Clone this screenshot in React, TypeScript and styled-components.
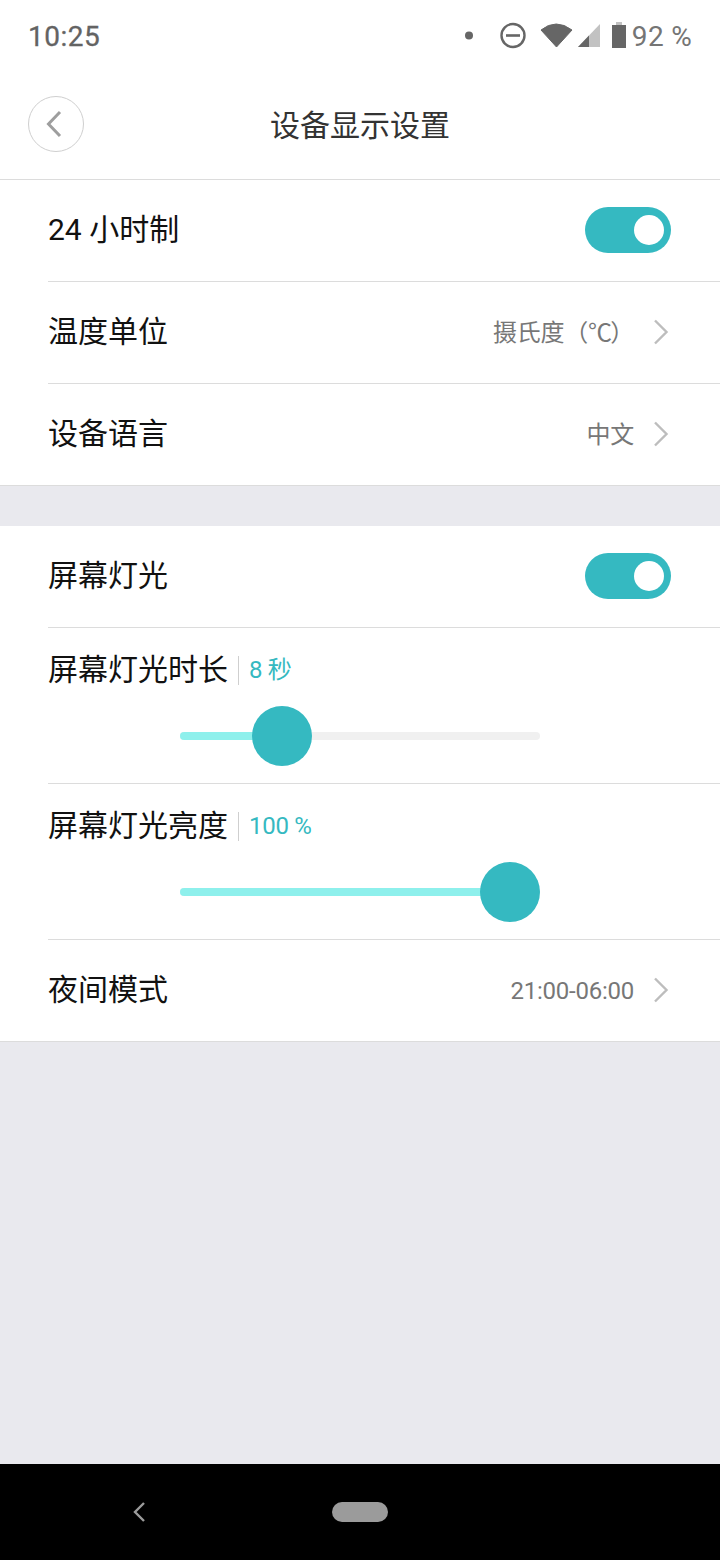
import styled, { createGlobalStyle } from 'styled-components';

const GlobalStyle = createGlobalStyle`
  html, body {
    margin: 0;
    padding: 0;
    background: #e9e9ee;
    font-family: Roboto, "Noto Sans CJK SC", sans-serif;
  }
`;

const Page = styled.div`
  width: 720px;
  height: 1560px;
  display: flex;
  flex-direction: column;
  background: #e9e9ee;
  overflow: hidden;
`;

const StatusBar = styled.div`
  height: 72px;
  padding: 0 28px;
  box-sizing: border-box;
  display: flex;
  align-items: center;
  justify-content: space-between;
  background: #fff;
  color: #757575;
`;

const Clock = styled.div`
  font-size: 28px;
  font-weight: 400;
  letter-spacing: 0.5px;
  color: #636363;
  -webkit-text-stroke: 0.3px #636363;
`;

const StatusIcons = styled.div`
  display: flex;
  align-items: center;
`;

const BatteryIcon = styled.svg`
  margin: -2px 0 0 -10px;
`;

const Battery = styled.div`
  margin-left: 6px;
  font-size: 28px;
  letter-spacing: 0.3px;
`;

const Header = styled.div`
  height: 108px;
  padding-left: 28px;
  box-sizing: border-box;
  position: relative;
  display: flex;
  align-items: center;
  background: #fff;
  border-bottom: 1px solid #dcdcdc;
`;

const BackButton = styled.div`
  width: 56px;
  height: 56px;
  box-sizing: border-box;
  margin-top: -3px;
  border: 1px solid #cfcfcf;
  border-radius: 50%;
  display: flex;
  align-items: center;
  justify-content: center;
`;

const BackArrow = styled.svg`
  margin-left: -5px;
`;

const Title = styled.div`
  position: absolute;
  inset: 0;
  display: flex;
  align-items: center;
  justify-content: center;
  font-family: "Noto Sans CJK SC", sans-serif;
  font-size: 30px;
  color: #333;
  padding-bottom: 6px;
  box-sizing: border-box;
`;

const Section = styled.div<{ $gap?: boolean }>`
  margin-top: ${({ $gap }) => ($gap ? '40px' : '0')};
  padding-left: 48px;
  background: #fff;
  border-bottom: 1px solid #dcdcdc;
`;

const Row = styled.div<{ $last?: boolean }>`
  height: ${({ $last }) => ($last ? '101px' : '102px')};
  box-sizing: border-box;
  padding: 0 49px 2px 0;
  display: flex;
  align-items: center;
  justify-content: space-between;
  border-bottom: ${({ $last }) => ($last ? 'none' : '1px solid #dcdcdc')};
`;

const Label = styled.div`
  font-size: 30px;
  line-height: 40px;
  color: #111;
`;

const Value = styled.div`
  display: flex;
  align-items: center;
  gap: 19px;
  margin-right: 2px;
  font-size: 24px;
  line-height: 32px;
  color: #777;
`;

const ValueText = styled.span`
  padding-top: 2px;
  letter-spacing: -0.25px;
`;

const Unit = styled.span`
  letter-spacing: -1.8px;
`;

const Toggle = styled.div`
  width: 86px;
  height: 46px;
  border-radius: 23px;
  background: #35b9c1;
  display: flex;
  align-items: center;
  justify-content: flex-end;
  padding-right: 7px;
  box-sizing: border-box;
`;

const ToggleKnob = styled.div`
  width: 30px;
  height: 30px;
  border-radius: 50%;
  background: #fff;
`;

const SliderRow = styled.div`
  height: 156px;
  box-sizing: border-box;
  padding-top: 24px;
  border-bottom: 1px solid #dcdcdc;
`;

const SliderHead = styled.div`
  height: 36px;
  display: flex;
  align-items: center;
`;

const SliderValue = styled.div`
  margin-left: 10px;
  padding-left: 10px;
  height: 29px;
  display: flex;
  align-items: center;
  border-left: 1px solid #cfcfcf;
  font-size: 24px;
  line-height: 29px;
  letter-spacing: -0.3px;
  color: #35b9c1;
`;

const Track = styled.div`
  width: 360px;
  height: 8px;
  margin: 44px 0 0 132px;
  border-radius: 4px;
  background: #f0f0f0;
  position: relative;
`;

const TrackFill = styled.div`
  height: 100%;
  border-radius: 4px;
  background: #8ef0ec;
`;

const Thumb = styled.div`
  position: absolute;
  top: -26px;
  width: 60px;
  height: 60px;
  border-radius: 50%;
  background: #35b9c1;
`;

const Filler = styled.div`
  flex: 1;
`;

const NavBar = styled.div`
  height: 96px;
  position: relative;
  display: flex;
  align-items: center;
  justify-content: center;
  background: #000;
`;

const NavBack = styled.div`
  position: absolute;
  left: 132px;
  top: 38px;
  display: flex;
`;

const HomePill = styled.div`
  width: 56px;
  height: 20px;
  border-radius: 10px;
  background: #9b9b9b;
`;

const Chevron = () => (
  <svg width="16" height="26" viewBox="0 0 16 26">
    <path d="M2 1.5 L13.5 13 L2 24.5" fill="none" stroke="#bdbdbd" strokeWidth="2.4" />
  </svg>
);

const Switch = () => (
  <Toggle>
    <ToggleKnob />
  </Toggle>
);

const Slider = ({ percent, thumb }: { percent: number; thumb: number }) => (
  <Track>
    <TrackFill style={{ width: `${percent}%` }} />
    <Thumb style={{ left: thumb }} />
  </Track>
);

const App = () => (
  <Page>
    <GlobalStyle />
    <StatusBar>
      <Clock>10:25</Clock>
      <StatusIcons>
        <svg width="182" height="36" viewBox="0 0 182 36">
          <circle cx="29" cy="17.5" r="4" fill="#666" />
          <circle cx="73" cy="17.5" r="11.5" fill="none" stroke="#666" strokeWidth="2.4" />
          <rect x="66" y="16.2" width="14" height="2.6" fill="#666" />
          <path d="M101 12 Q116 0 132 12 L116.5 29 Z" fill="#666" stroke="#666" strokeWidth="1" strokeLinejoin="round" />
          <path d="M138 29 L160 6 L160 29 Z" fill="#c2c2c2" />
          <path d="M138 29 L149 17.5 L149 29 Z" fill="#666" />
        </svg>
        <BatteryIcon width="14" height="26" viewBox="0 0 14 26">
          <path d="M4 0 H10 V3 H4 Z" fill="#c2c2c2" />
          <rect x="0" y="3" width="14" height="23" fill="#666" />
        </BatteryIcon>
        <Battery>92 %</Battery>
      </StatusIcons>
    </StatusBar>
    <Header>
      <BackButton>
        <BackArrow width="18" height="28" viewBox="0 0 18 28">
          <path d="M15 2 L3.5 14 L15 26" fill="none" stroke="#9e9e9e" strokeWidth="3" />
        </BackArrow>
      </BackButton>
      <Title>设备显示设置</Title>
    </Header>
    <Section>
      <Row>
        <Label>24 小时制</Label>
        <Switch />
      </Row>
      <Row>
        <Label>温度单位</Label>
        <Value>
          <ValueText>
            摄氏度（<Unit>℃</Unit>）
          </ValueText>
          <Chevron />
        </Value>
      </Row>
      <Row $last>
        <Label>设备语言</Label>
        <Value>
          <ValueText>中文</ValueText>
          <Chevron />
        </Value>
      </Row>
    </Section>
    <Section $gap>
      <Row>
        <Label>屏幕灯光</Label>
        <Switch />
      </Row>
      <SliderRow>
        <SliderHead>
          <Label>屏幕灯光时长</Label>
          <SliderValue>8 秒</SliderValue>
        </SliderHead>
        <Slider percent={25} thumb={72} />
      </SliderRow>
      <SliderRow>
        <SliderHead>
          <Label>屏幕灯光亮度</Label>
          <SliderValue>100 %</SliderValue>
        </SliderHead>
        <Slider percent={95} thumb={300} />
      </SliderRow>
      <Row $last>
        <Label>夜间模式</Label>
        <Value>
          <ValueText>21:00-06:00</ValueText>
          <Chevron />
        </Value>
      </Row>
    </Section>
    <Filler />
    <NavBar>
      <NavBack>
        <svg width="14" height="20" viewBox="0 0 14 20">
          <path d="M12 1 L3 10 L12 19" fill="none" stroke="#9b9b9b" strokeWidth="2.4" />
        </svg>
      </NavBack>
      <HomePill />
    </NavBar>
  </Page>
);

export default App;
